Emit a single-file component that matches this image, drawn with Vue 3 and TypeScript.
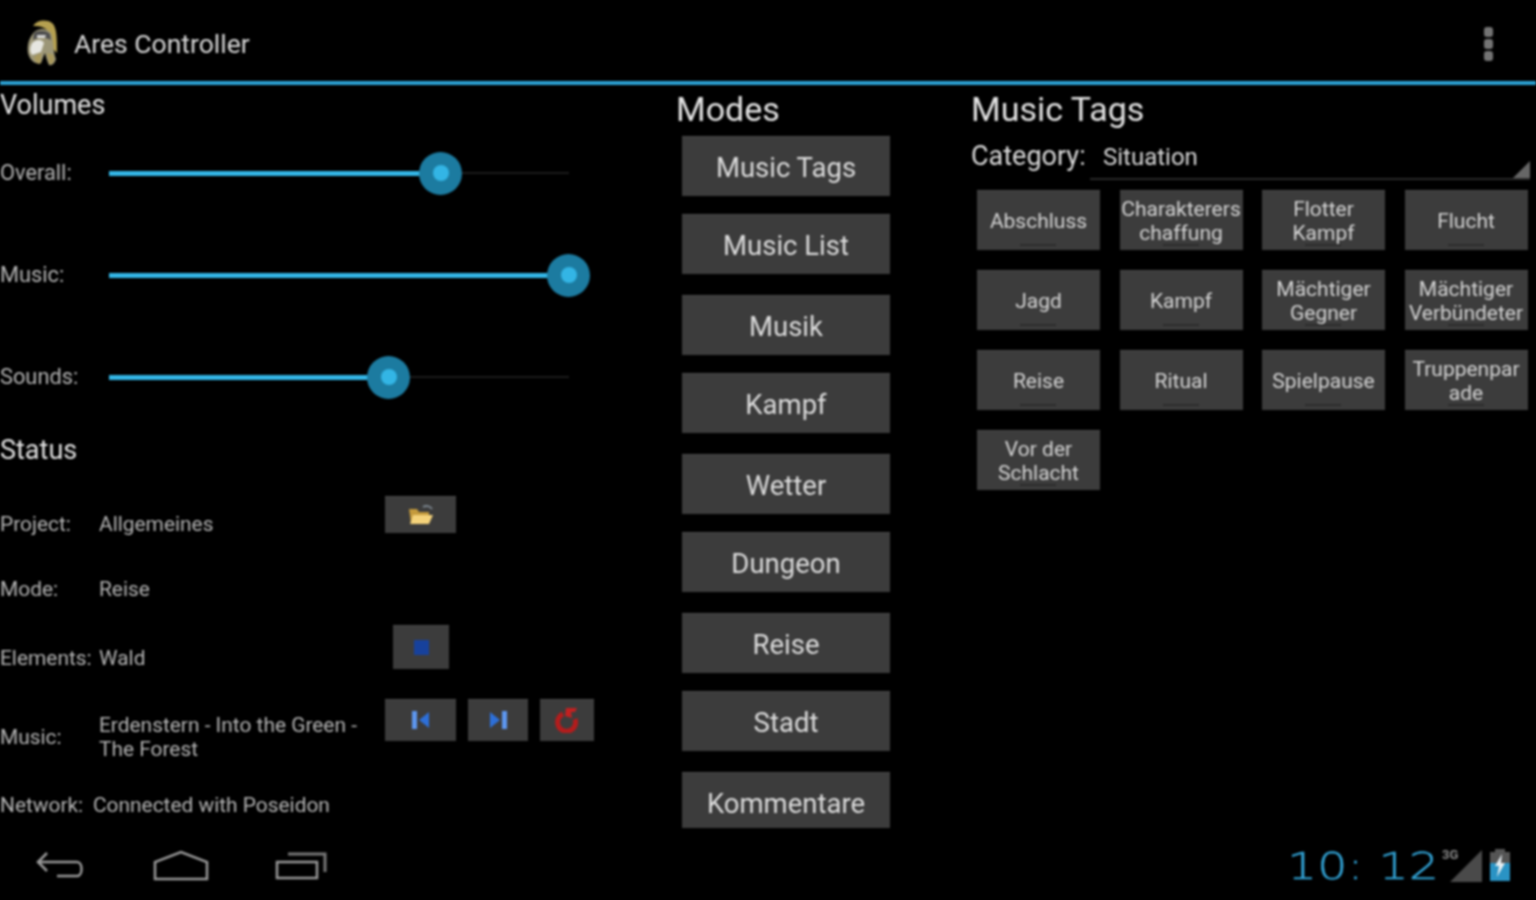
<script setup lang="ts">
const sliders = [
  { label: 'Overall:', pct: 72.2 },
  { label: 'Music:', pct: 100 },
  { label: 'Sounds:', pct: 60.9 },
]
const modes = ['Music Tags', 'Music List', 'Musik', 'Kampf', 'Wetter', 'Dungeon', 'Reise', 'Stadt', 'Kommentare']
const tags = ['Abschluss', 'Charakterers chaffung', 'Flotter Kampf', 'Flucht', 'Jagd', 'Kampf', 'Mächtiger Gegner', 'Mächtiger Verbündeter', 'Reise', 'Ritual', 'Spielpause', 'Truppenpar ade', 'Vor der Schlacht']
</script>

<template>
  <div class="screen">
    <header class="action-bar">
      <svg class="logo" viewBox="0 0 36 50" width="36" height="50">
        <path d="M9 7C13 1 22 0 28 4C33 8 33 20 33 34L29 30C29 20 26 12 20 9C16 7 12 7 9 7Z" fill="#b5a050" />
        <path d="M8 16C12 9 22 8 27 14C30 22 29 34 32 40C31 44 28 47 25 46C23 42 22 38 21 34C19 38 18 42 17 44C12 46 6 42 4 34C3 26 5 20 8 16Z" fill="#9c9677" />
        <path d="M10 14C14 11 22 11 26 15L27 21C21 18 15 18 9 21Z" fill="#4e4e4e" />
        <path d="M13 16L22 16L21 19L13 19Z" fill="#d8d8d8" />
        <path d="M8 24C12 20 18 20 20 24L17 33L8 36C5 32 6 28 8 24Z" fill="#e6e6e0" />
        <path d="M10 38L17 34L17 44C14 46 11 43 10 38Z" fill="#a8985c" />
        <path d="M23 34L30 36L30 42C28 46 26 45 25 45Z" fill="#a8985c" />
      </svg>
      <span class="app-title">Ares Controller</span>
      <span class="overflow"><i></i><i></i><i></i></span>
    </header>

    <main class="content">
      <section class="col-left">
        <h2 class="vol-title">Volumes</h2>
        <div class="sliders">
          <div v-for="s in sliders" :key="s.label" class="slider-row">
            <span class="small-label">{{ s.label }}</span>
            <div class="track">
              <div class="fill" :style="{ width: s.pct + '%' }">
                <span class="thumb"><span class="thumb-core"></span></span>
              </div>
            </div>
          </div>
        </div>

        <h2 class="status-title">Status</h2>

        <div class="status-row project">
          <span class="small-label k1">Project:</span>
          <span class="small-label val-project">Allgemeines</span>
          <button class="icon-btn b-folder">
            <svg viewBox="0 0 26 22" width="26" height="22">
              <path d="M15 3C18 1 22 2 24 5" fill="none" stroke="#7d8790" stroke-width="2" />
              <path d="M1 5H9L11 8H21V19H3Z" fill="#c49a3c" />
              <path d="M5 11H25L21 20H2Z" fill="#f4d27a" />
            </svg>
          </button>
        </div>
        <div class="status-row mode">
          <span class="small-label k1">Mode:</span>
          <span class="small-label">Reise</span>
        </div>
        <div class="status-row elements">
          <span class="small-label k2">Elements:</span>
          <span class="small-label val-elements">Wald</span>
          <button class="icon-btn b-stop">
            <span class="stop"></span>
          </button>
        </div>
        <div class="status-row music">
          <span class="small-label k1">Music:</span>
          <span class="small-label music-name">Erdenstern - Into the Green - The Forest</span>
          <div class="music-btns">
            <button class="icon-btn b-prev">
              <svg viewBox="0 0 22 20" width="22" height="20">
                <rect x="2" y="1" width="5" height="18" fill="#5d96ee" />
                <path d="M19 2V18L9 10Z" fill="#2d6fd8" />
              </svg>
            </button>
            <button class="icon-btn b-next">
              <svg viewBox="0 0 22 20" width="22" height="20">
                <path d="M3 2V18L13 10Z" fill="#2d6fd8" />
                <rect x="15" y="1" width="5" height="18" fill="#5d96ee" />
              </svg>
            </button>
            <button class="icon-btn b-redo">
              <svg viewBox="0 0 26 26" width="26" height="26">
                <path d="M9 7A9 9 0 1 0 21 12" fill="none" stroke="#b31c1c" stroke-width="5" />
                <path d="M12 1H23L21 5H17L18 11L11 9Z" fill="#c42020" />
              </svg>
            </button>
          </div>
        </div>
        <div class="status-row network">
          <span class="small-label k3">Network:</span>
          <span class="small-label">Connected with Poseidon</span>
        </div>
      </section>

      <section class="col-mid">
        <h2 class="big-title">Modes</h2>
        <div class="mode-list">
          <button v-for="m in modes" :key="m" class="mode-btn">{{ m }}</button>
        </div>
      </section>

      <section class="col-right">
        <h2 class="big-title">Music Tags</h2>
        <div class="category">
          <span class="cat-label">Category:</span>
          <div class="spinner"><span>Situation</span><i class="corner"></i></div>
        </div>
        <div class="tag-grid">
          <button v-for="t in tags" :key="t" class="tag-btn">{{ t }}</button>
        </div>
      </section>
    </main>

    <footer class="nav-bar">
      <div class="nav-icons">
        <svg viewBox="0 0 50 30" width="50" height="30" class="nav-back">
          <path d="M12 2L3 11L12 20M3 11H42C48 11 48 25 42 25H22" fill="none" stroke="#999" stroke-width="2.5" />
        </svg>
        <svg viewBox="0 0 56 32" width="56" height="32" class="nav-home">
          <path d="M2 29V12L28 2L54 12V29Z" fill="none" stroke="#999" stroke-width="2.5" />
        </svg>
        <svg viewBox="0 0 54 30" width="54" height="30" class="nav-recent">
          <path d="M2 11H42V27H2Z" fill="none" stroke="#999" stroke-width="2.5" />
          <path d="M13 3H50V21" fill="none" stroke="#777" stroke-width="3" />
        </svg>
      </div>
      <div class="tray">
        <span class="clock">10: 12</span>
        <div class="signal">
          <span class="net-type">3G</span>
          <svg viewBox="0 0 32 32" width="32" height="32"><path d="M32 0V32H0Z" fill="#4a4a4a" /></svg>
        </div>
        <svg class="battery" viewBox="0 0 24 34" width="24" height="34">
          <rect x="7" y="0" width="10" height="4" fill="#555" />
          <rect x="2" y="3" width="20" height="11" fill="#555" />
          <rect x="2" y="14" width="20" height="18" fill="#2a93c4" />
          <path d="M14 5L7 17H11L9 28L17 14H13Z" fill="#e8eef2" />
        </svg>
      </div>
    </footer>
  </div>
</template>

<style>
body {
  background: #000;
}
</style>

<style scoped>
.screen {
  width: 1536px;
  height: 900px;
  background: #000;
  color: #dcdcdc;
  font-family: Roboto, "Liberation Sans", sans-serif;
  display: flex;
  flex-direction: column;
  overflow: hidden;
  filter: blur(0.8px);
}
.action-bar {
  flex: none;
  height: 75px;
  border-bottom: 4px solid #2b9fd2;
  display: flex;
  align-items: center;
  padding: 6px 43px 0 24px;
}
.logo {
  flex: none;
}
.app-title {
  margin-left: 14px;
  font-size: 26.5px;
  color: #d8d8d8;
}
.overflow {
  margin-left: auto;
  display: flex;
  flex-direction: column;
  gap: 2px;
}
.overflow i {
  width: 9px;
  height: 10px;
  border-radius: 3px;
  background: #747474;
}
.content {
  flex: 1;
  min-height: 0;
  display: flex;
}
.col-left {
  width: 676px;
  flex: none;
}
.col-mid {
  width: 295px;
  flex: none;
}
.col-right {
  flex: 1;
  min-width: 0;
}
h2 {
  margin: 0;
  font-weight: 400;
  color: #e2e2e2;
}
.vol-title {
  font-size: 27px;
  line-height: 30px;
  padding-top: 5px;
}
.sliders {
  margin-top: 2px;
}
.slider-row {
  height: 102px;
  display: flex;
  align-items: center;
}
.slider-row .small-label {
  width: 109px;
  flex: none;
  font-size: 21.8px;
}
.small-label {
  font-size: 20.9px;
  line-height: 24px;
  color: #b4b4b4;
}
.track {
  width: 460px;
  height: 2px;
  background: #1c1c1c;
}
.fill {
  height: 5px;
  margin-top: -1.5px;
  background: #33b5e5;
  position: relative;
}
.thumb {
  position: absolute;
  right: -21px;
  top: -19px;
  width: 43px;
  height: 43px;
  border-radius: 50%;
  background: #1c7ba0;
  display: flex;
  align-items: center;
  justify-content: center;
}
.thumb-core {
  width: 16px;
  height: 16px;
  border-radius: 50%;
  background: #33b5e5;
}
.status-title {
  font-size: 27px;
  line-height: 30px;
  margin-top: 7px;
}
.status-row {
  display: flex;
  align-items: flex-start;
}
.k1,
.k2 {
  width: 99px;
  flex: none;
}
.k3 {
  width: 93px;
  flex: none;
}
.project {
  margin-top: 31px;
  height: 40px;
}
.project .small-label {
  padding-top: 16px;
}
.val-project {
  width: 286px;
  flex: none;
}
.b-folder {
  width: 71px;
  height: 37px;
}
.mode {
  margin-top: 41px;
  height: 24px;
}
.elements {
  margin-top: 24px;
  height: 51px;
}
.elements .small-label {
  padding-top: 21px;
}
.val-elements {
  width: 294px;
  flex: none;
}
.b-stop {
  width: 56px;
  height: 44px;
}
.stop {
  width: 15px;
  height: 15px;
  background: #17419c;
}
.music {
  margin-top: 23px;
  height: 62px;
}
.music > .k1 {
  padding-top: 26px;
}
.music-name {
  width: 286px;
  padding-top: 14px;
  flex: none;
}
.music-btns {
  display: flex;
  gap: 12px;
}
.b-prev {
  width: 71px;
  height: 42px;
}
.b-next {
  width: 60px;
  height: 42px;
}
.b-redo {
  width: 54px;
  height: 42px;
}
.network {
  margin-top: 32px;
}
.icon-btn {
  display: flex;
  align-items: center;
  justify-content: center;
  padding: 0;
  border: 0;
  background: #3c3c3c;
  box-shadow: inset 0 1px 0 #4a4a4a;
  flex: none;
}
.big-title {
  font-size: 34px;
  line-height: 40px;
  padding-top: 4px;
}
.mode-list {
  margin-top: 7px;
  margin-left: 6px;
  display: flex;
  flex-direction: column;
}
.mode-btn {
  width: 208px;
  height: 60px;
  flex: none;
  padding: 3px 0 0;
  border: 0;
  background: #3c3c3c;
  box-shadow: inset 0 1px 0 #4a4a4a;
  font: 27.5px Roboto, "Liberation Sans", sans-serif;
  color: #dcdcdc;
}
.mode-btn:nth-child(odd) {
  margin-bottom: 18px;
}
.mode-btn:nth-child(even) {
  margin-bottom: 21px;
}
.mode-btn:last-child {
  height: 56px;
  padding-top: 7px;
}
.category {
  display: flex;
  align-items: flex-start;
  height: 43px;
  margin-top: 12px;
}
.cat-label {
  font-size: 27px;
  line-height: 30px;
  color: #dcdcdc;
  width: 119px;
  flex: none;
}
.spinner {
  width: 427px;
  height: 33px;
  margin-top: 4px;
  border-bottom: 2px solid #2a2a2a;
  padding-left: 13px;
  font-size: 24px;
  line-height: 24px;
  color: #d8d8d8;
  position: relative;
}
.corner {
  position: absolute;
  right: 0;
  bottom: 0;
  width: 0;
  height: 0;
  border-style: solid;
  border-width: 0 0 17px 17px;
  border-color: transparent transparent #666 transparent;
}
.tag-grid {
  margin: 6px 0 0 6px;
  display: grid;
  grid-template-columns: repeat(4, 123px);
  grid-auto-rows: 60px;
  column-gap: 19.5px;
  row-gap: 20px;
}
.tag-btn {
  padding: 1px 0 0;
  border: 0;
  background: #3c3c3c;
  box-shadow: inset 0 1px 0 #4a4a4a;
  font: 21px/24px Roboto, "Liberation Sans", sans-serif;
  color: #d4d4d4;
  position: relative;
  overflow-wrap: anywhere;
}
.tag-btn::after {
  content: "";
  position: absolute;
  left: 43px;
  bottom: 4px;
  width: 36px;
  height: 2px;
  background: #2c2c2c;
}
.nav-bar {
  flex: none;
  height: 60px;
  display: flex;
  align-items: center;
  justify-content: space-between;
  padding: 0 24px 4px 35px;
}
.nav-icons {
  display: flex;
  align-items: center;
  gap: 68px;
}
.nav-recent {
  margin-left: -2px;
}
.tray {
  display: flex;
  align-items: center;
}
.clock {
  font-family: "DejaVu Sans", sans-serif;
  font-weight: 200;
  font-size: 38px;
  line-height: 40px;
  color: #33a5d8;
  display: inline-block;
  width: 163px;
  margin-left: -3px;
  white-space: nowrap;
  -webkit-text-stroke: 0.4px #33a5d8;
  transform: scaleX(1.25);
  transform-origin: left;
}
.signal {
  position: relative;
  width: 32px;
  height: 32px;
}
.net-type {
  position: absolute;
  left: -8px;
  top: -3px;
  font-size: 13px;
  font-weight: 700;
  color: #888;
}
.battery {
  margin-left: 6px;
}
</style>
